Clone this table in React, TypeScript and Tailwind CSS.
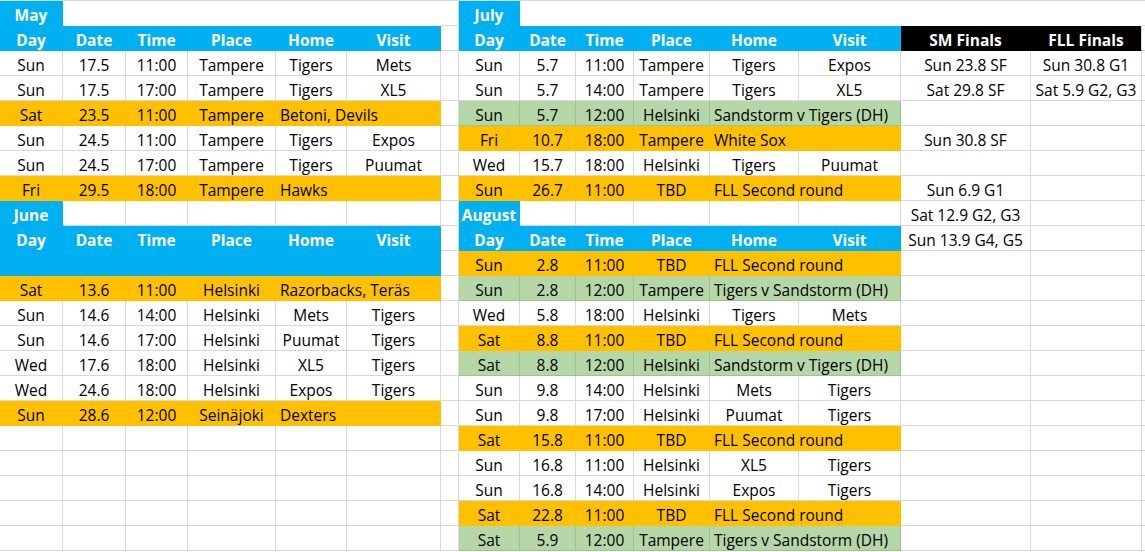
import React from "react";

type Kind = "w" | "wf" | "b" | "o" | "g" | "k" | "k2" | "p";
type Cell = { t?: string; k: Kind; span?: 2 | 5 | 7; left?: boolean };

const kindCls: Record<Kind, string> = {
  w: "bg-white border-[#d9d9d9] text-black",
  wf: "bg-white border-white text-black",
  b: "bg-[#00b0f0] border-[#00b0f0] text-white font-bold text-[15.5px]",
  o: "bg-[#ffc000] border-[#ffc000] text-black",
  g: "bg-[#b5d6a7] border-[#9fc190] text-black",
  k: "bg-black border-black text-white font-bold text-[15.5px]",
  k2: "bg-black border-black border-r-[#d9d9d9] text-white font-bold text-[15.5px]",
  p: "bg-white border-[#d9d9d9] border-r-0",
};

const spanCls: Record<number, string> = {
  1: "",
  2: "col-span-2",
  5: "col-span-5",
  7: "col-span-7",
};

const W = (t = ""): Cell => ({ t, k: "w" });
const B = (t = ""): Cell => ({ t, k: "b" });
const O = (t = ""): Cell => ({ t, k: "o" });
const G = (t = ""): Cell => ({ t, k: "g" });
const OL = (t: string): Cell => ({ t, k: "o", span: 2, left: true });
const GL = (t: string): Cell => ({ t, k: "g", span: 2, left: true });
const P: Cell = { k: "p" };

const hdr = ["Day", "Date", "Time", "Place", "Home", "Visit"];
const wrow = (...a: string[]) => a.map((x) => W(x));
const orow = (d: string, dt: string, tm: string, pl: string, txt: string) => [O(d), O(dt), O(tm), O(pl), OL(txt)];
const grow = (d: string, dt: string, tm: string, pl: string, txt: string) => [G(d), G(dt), G(tm), G(pl), GL(txt)];
const blank6 = () => wrow("", "", "", "", "", "");

const rows: Cell[][] = [
  [B("May"), { k: "wf", span: 5 }, W(), B("July"), { k: "wf", span: 7 }, P],
  [...hdr.map(B), W(), ...hdr.map(B), { t: "SM Finals", k: "k" }, { t: "FLL Finals", k: "k2" }, P],
  [...wrow("Sun", "17.5", "11:00", "Tampere", "Tigers", "Mets"), W(), ...wrow("Sun", "5.7", "11:00", "Tampere", "Tigers", "Expos"), W("Sun 23.8 SF"), W("Sun 30.8 G1"), P],
  [...wrow("Sun", "17.5", "17:00", "Tampere", "Tigers", "XL5"), W(), ...wrow("Sun", "5.7", "14:00", "Tampere", "Tigers", "XL5"), W("Sat 29.8 SF"), W("Sat 5.9 G2, G3"), P],
  [...orow("Sat", "23.5", "11:00", "Tampere", "Betoni, Devils"), W(), ...grow("Sun", "5.7", "12:00", "Helsinki", "Sandstorm v Tigers (DH)"), W(), W(), P],
  [...wrow("Sun", "24.5", "11:00", "Tampere", "Tigers", "Expos"), W(), ...orow("Fri", "10.7", "18:00", "Tampere", "White Sox"), W("Sun 30.8 SF"), W(), P],
  [...wrow("Sun", "24.5", "17:00", "Tampere", "Tigers", "Puumat"), W(), ...wrow("Wed", "15.7", "18:00", "Helsinki", "Tigers", "Puumat"), W(), W(), P],
  [...orow("Fri", "29.5", "18:00", "Tampere", "Hawks"), W(), ...orow("Sun", "26.7", "11:00", "TBD", "FLL Second round"), W("Sun 6.9 G1"), W(), P],
  [B("June"), ...wrow("", "", "", "", ""), W(), B("August"), ...wrow("", "", "", "", ""), W("Sat 12.9 G2, G3"), W(), P],
  [...hdr.map(B), W(), ...hdr.map(B), W("Sun 13.9 G4, G5"), W(), P],
  [B(), B(), B(), B(), B(), B(), W(), ...orow("Sun", "2.8", "11:00", "TBD", "FLL Second round"), W(), W(), P],
  [...orow("Sat", "13.6", "11:00", "Helsinki", "Razorbacks, Teräs"), W(), ...grow("Sun", "2.8", "12:00", "Tampere", "Tigers v Sandstorm (DH)"), W(), W(), P],
  [...wrow("Sun", "14.6", "14:00", "Helsinki", "Mets", "Tigers"), W(), ...wrow("Wed", "5.8", "18:00", "Helsinki", "Tigers", "Mets"), W(), W(), P],
  [...wrow("Sun", "14.6", "17:00", "Helsinki", "Puumat", "Tigers"), W(), ...orow("Sat", "8.8", "11:00", "TBD", "FLL Second round"), W(), W(), P],
  [...wrow("Wed", "17.6", "18:00", "Helsinki", "XL5", "Tigers"), W(), ...grow("Sat", "8.8", "12:00", "Helsinki", "Sandstorm v Tigers (DH)"), W(), W(), P],
  [...wrow("Wed", "24.6", "18:00", "Helsinki", "Expos", "Tigers"), W(), ...wrow("Sun", "9.8", "14:00", "Helsinki", "Mets", "Tigers"), W(), W(), P],
  [...orow("Sun", "28.6", "12:00", "Seinäjoki", "Dexters"), W(), ...wrow("Sun", "9.8", "17:00", "Helsinki", "Puumat", "Tigers"), W(), W(), P],
  [...blank6(), W(), ...orow("Sat", "15.8", "11:00", "TBD", "FLL Second round"), W(), W(), P],
  [...blank6(), W(), ...wrow("Sun", "16.8", "11:00", "Helsinki", "XL5", "Tigers"), W(), W(), P],
  [...blank6(), W(), ...wrow("Sun", "16.8", "14:00", "Helsinki", "Expos", "Tigers"), W(), W(), P],
  [...blank6(), W(), ...orow("Sat", "22.8", "11:00", "TBD", "FLL Second round"), W(), W(), P],
  [...blank6(), W(), ...grow("Sat", "5.9", "12:00", "Tampere", "Tigers v Sandstorm (DH)"), W(), W(), P],
];

export default function App() {
  return (
    <div
      className="w-[1145px] h-[552px] overflow-hidden bg-white"
      style={{ fontFamily: '"Open Sans", "Noto Sans", sans-serif' }}
    >
      <div className="grid grid-cols-[63px_63px_62px_88px_71px_94px_18px_61px_56px_58px_76px_89px_102px_130px_111px_3px] border-t border-[#d9d9d9] text-[15.5px] leading-[24px]">
        {rows.map((r, ri) =>
          r.map((c, ci) => (
            <div
              key={`${ri}-${ci}`}
              className={`h-[25px] pt-[3px] border-r border-b whitespace-nowrap flex items-center ${
                c.left ? "justify-start pl-[4px]" : "justify-center"
              } ${kindCls[c.k]} ${spanCls[c.span ?? 1]}`}
            >
              {c.t}
            </div>
          ))
        )}
      </div>
    </div>
  );
}
